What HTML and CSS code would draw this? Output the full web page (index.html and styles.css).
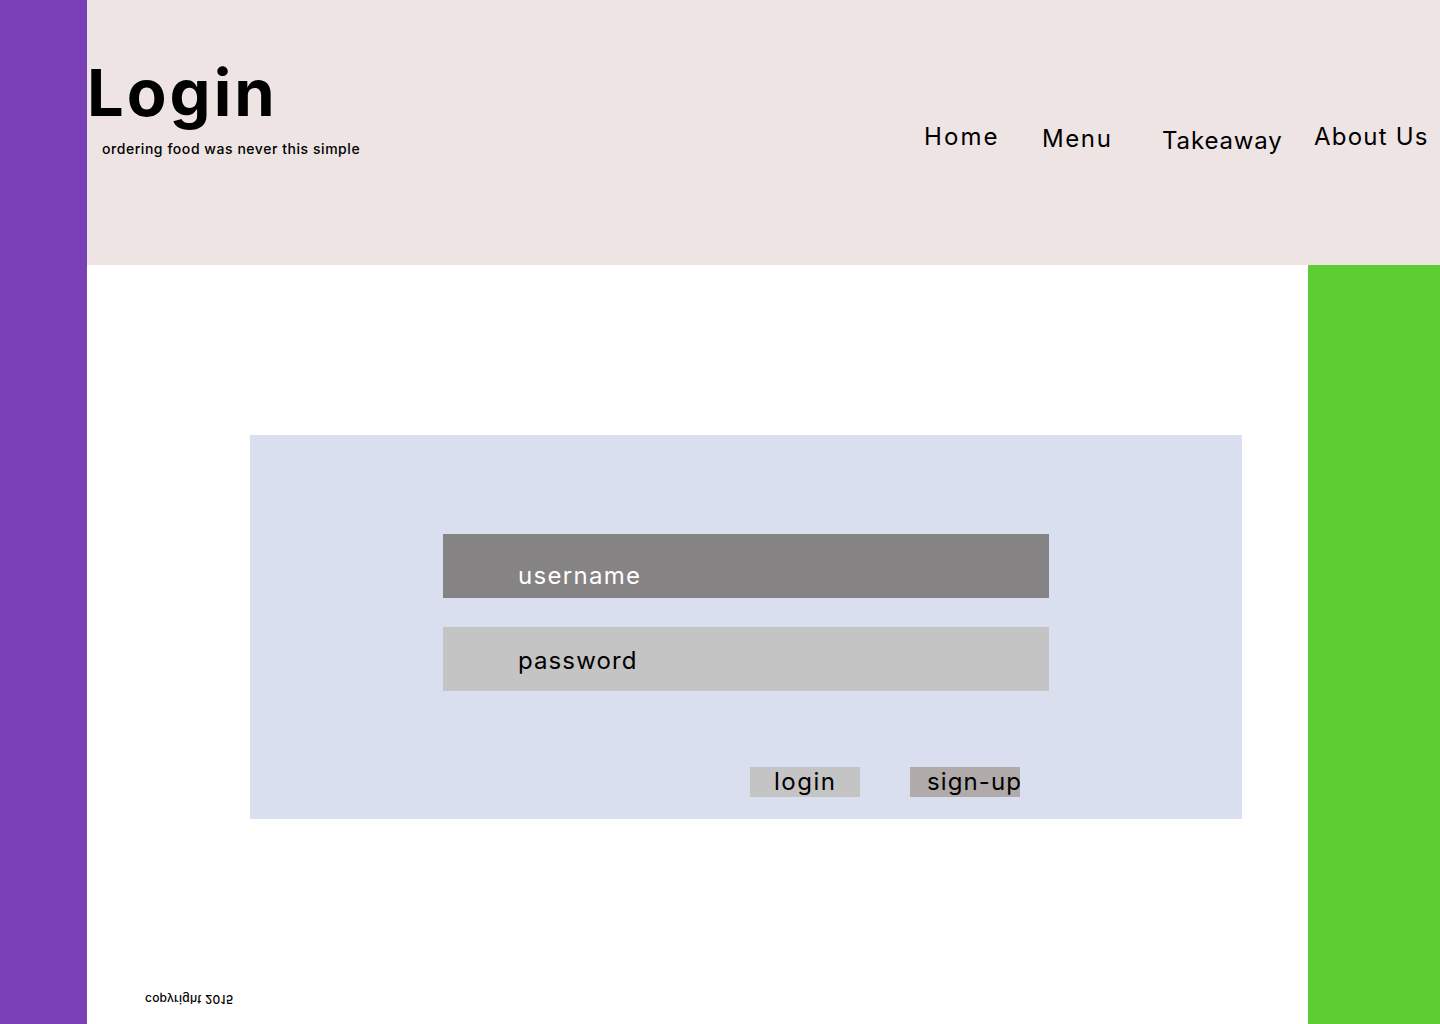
FILE: index.html
```html
<!DOCTYPE html>
<html lang="en">
<head>
<meta charset="utf-8">
<title>Login</title>
<link rel="stylesheet" href="styles.css">
</head>
<body>
<div class="page">
  <aside class="side-left"></aside>
  <header class="header">
    <div class="brand">
      <h1 class="title">Login</h1>
      <p class="tagline">ordering food was never this simple</p>
    </div>
    <nav class="nav">
      <a class="nav-item nav-home" href="#">Home</a>
      <a class="nav-item nav-menu" href="#">Menu</a>
      <a class="nav-item nav-takeaway" href="#">Takeaway</a>
      <a class="nav-item nav-about" href="#">About Us</a>
    </nav>
  </header>
  <main class="main">
    <section class="panel">
      <div class="field field-user">username</div>
      <div class="field field-pass">password</div>
      <div class="actions">
        <button class="btn btn-login">login</button>
        <button class="btn btn-signup">sign-up</button>
      </div>
    </section>
    <footer class="copyright">copyright 2015</footer>
  </main>
  <aside class="side-right"></aside>
</div>
</body>
</html>
```

FILE: styles.css
```css
* { box-sizing: border-box; }
html, body { margin: 0; padding: 0; }
body {
  font-family: Inter, "DejaVu Sans", sans-serif;
  color: #000;
  background: #fff;
}
.page {
  display: grid;
  grid-template-columns: 87px 1221px 132px;
  grid-template-rows: 265px 759px;
  width: 1440px;
  height: 1024px;
  overflow: hidden;
}
.side-left {
  grid-column: 1;
  grid-row: 1 / 3;
  background: #7a40b5;
}
.side-right {
  grid-column: 3;
  grid-row: 2;
  background: #5ccd33;
}
.header {
  grid-column: 2 / 4;
  grid-row: 1;
  background: #eee4e3;
  display: flex;
  align-items: flex-start;
}
.brand {
  width: 837px;
  flex: none;
  padding-top: 54px;
}
.title {
  margin: 0;
  font-size: 65px;
  font-weight: 700;
  line-height: 78px;
  letter-spacing: 3px;
}
.tagline {
  margin: 8px 0 0;
  padding-left: 15px;
  font-size: 14px;
  font-weight: 500;
  line-height: 18px;
  letter-spacing: 0.55px;
}
.nav {
  display: flex;
  align-items: flex-start;
  padding-top: 121px;
}
.nav-item {
  flex: none;
  color: #000;
  text-decoration: none;
  font-size: 24px;
  line-height: 32px;
  letter-spacing: 1.1px;
  white-space: nowrap;
}
.nav-home { width: 118px; letter-spacing: 2.1px; }
.nav-menu { width: 120px; margin-top: 2px; letter-spacing: 1.6px; }
.nav-takeaway { width: 152px; margin-top: 4px; letter-spacing: 0.85px; }
.nav-about { letter-spacing: 1.2px; }
.main {
  grid-column: 2;
  grid-row: 2;
  display: flex;
  flex-direction: column;
  padding: 170px 0 0 163px;
}
.panel {
  width: 992px;
  height: 384px;
  background: #d9dfee;
  display: flex;
  flex-direction: column;
  padding: 99px 0 0 193px;
}
.field {
  width: 606px;
  height: 64px;
  padding-left: 75px;
  font-size: 24px;
  line-height: 30px;
  letter-spacing: 1.3px;
}
.field-user { background: #858383; color: #fff; padding-top: 27px; }
.field-pass { background: #c4c4c4; color: #000; margin-top: 29px; padding-top: 19px; letter-spacing: 1.1px; }
.actions {
  display: flex;
  margin-top: 76px;
  padding-left: 307px;
}
.btn {
  width: 110px;
  height: 30px;
  border: 0;
  padding: 0;
  font-family: inherit;
  font-size: 24px;
  line-height: 30px;
  letter-spacing: 1.1px;
  color: #000;
  white-space: nowrap;
  overflow: visible;
}
.btn-login { background: #c4c4c4; text-align: left; padding-left: 24px; letter-spacing: 1.5px; }
.btn-signup {
  background: #b1aaaa;
  margin-left: 50px;
  text-align: left;
  padding-left: 17px;
}
.copyright {
  margin-top: 173px;
  margin-left: -105px;
  font-size: 12px;
  line-height: 14px;
  font-weight: 500;
  letter-spacing: 0.2px;
  transform: scaleY(-1);
  width: max-content;
}
```
